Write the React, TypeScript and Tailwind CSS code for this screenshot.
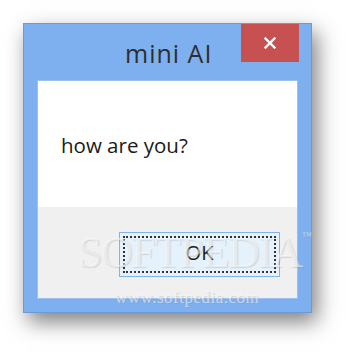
import React from 'react';

export default function App() {
  return (
    <div className="w-[350px] h-[352px] bg-white relative overflow-hidden" style={{ fontFamily: '"Open Sans", "Noto Sans", sans-serif' }}>
      <div className="pt-[23px] pl-[23px]">
        {/* Fenêtre */}
        <div className="w-[289px] h-[290px] bg-[#7eb0f0] border border-[#6b9ad6] shadow-[5px_9px_20px_rgba(0,0,0,0.5)] flex flex-col">
          <div className="h-[56px] relative pt-[17px] pl-[101px]">
            <span className="block text-[25px] tracking-[1px] text-[#2e2e2e] leading-none">mini AI</span>
            <button className="absolute right-[12px] top-0 w-[58px] h-[38px] bg-[#c75050] flex items-center justify-center">
              <svg width="12" height="12" viewBox="0 0 12 12">
                <path d="M1.5 1.5 L10.5 10.5 M10.5 1.5 L1.5 10.5" stroke="#fff" strokeWidth="2.4" strokeLinecap="square" />
              </svg>
            </button>
          </div>
          <div className="mx-[13px] flex-1 mb-[13px] border border-[#9cc0ef] flex flex-col">
            <div className="bg-white h-[126px] pl-[23px] pt-[54px]">
              <span className="block text-[20.5px] text-[#1a1a1a] leading-none">how are you?</span>
            </div>
            <div className="flex-1 bg-[#f0f0f0] pt-[25px] pl-[81px]">
              <button className="w-[161px] h-[45px] bg-[#e5f1fb] border border-[#7eb4ea] p-[3px]">
                <div className="w-full h-full border-2 border-dotted border-[#333] flex items-center justify-center pb-[3px]">
                  <span className="text-[20px] text-[#1a1a1a] leading-none">OK</span>
                </div>
              </button>
            </div>
          </div>
        </div>
      </div>
      {/* filigrane */}
      <div
        className="absolute left-[78px] top-[231px] text-[44px] leading-none tracking-[-1.5px] text-[rgba(255,255,255,0.5)] pointer-events-none [text-shadow:1px_1px_1px_rgba(150,150,150,0.3)]"
        style={{ fontFamily: '"Liberation Serif", serif' }}
      >
        SOFTPEDIA<span className="text-[10px] align-top tracking-normal">™</span>
      </div>
      <div
        className="absolute left-[115px] top-[289px] text-[17px] tracking-[0.5px] leading-none text-[rgba(255,255,255,0.55)] pointer-events-none [text-shadow:1px_1px_1px_rgba(150,150,150,0.4)]"
        style={{ fontFamily: '"Liberation Serif", serif' }}
      >
        www.softpedia.com
      </div>
    </div>
  );
}
